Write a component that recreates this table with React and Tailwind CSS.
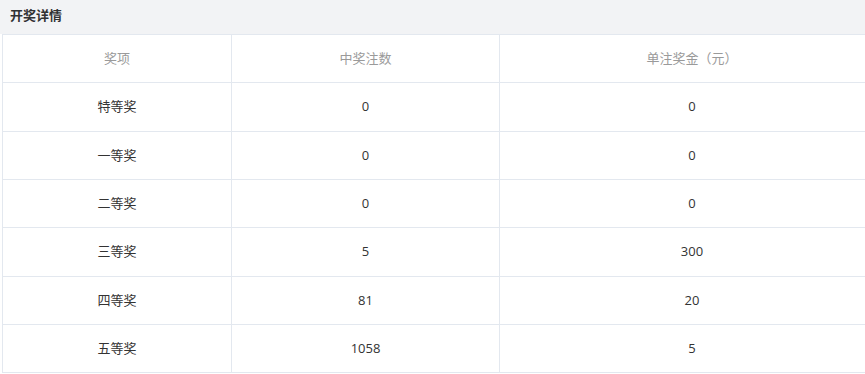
const rows = [
    { name: '特等奖', count: '0', prize: '0' },
    { name: '一等奖', count: '0', prize: '0' },
    { name: '二等奖', count: '0', prize: '0' },
    { name: '三等奖', count: '5', prize: '300' },
    { name: '四等奖', count: '81', prize: '20' },
    { name: '五等奖', count: '1058', prize: '5' },
];

export default function App() {
    return (
        <div className="w-[865px] h-[374px] bg-white overflow-hidden font-['Open_Sans','Noto_Sans_CJK_SC',sans-serif] text-[13px]">
            {/* Title bar */}
            <div className="h-[34px] bg-[#f2f3f5] flex items-center px-[10px] pb-[3px]">
                <span className="font-bold text-[#303133]">开奖详情</span>
            </div>

            {/* Table (wider than the view, cut at the right) */}
            <div className="ml-[2px] w-[882px] border-l border-t border-[#e3e8ef]">
                <div className="grid grid-cols-[229px_268px_1fr] h-[48px] border-b border-[#e3e8ef] text-[#9a9a9a]">
                    <div className="flex items-center justify-center border-r border-[#e3e8ef]">奖项</div>
                    <div className="flex items-center justify-center border-r border-[#e3e8ef]">中奖注数</div>
                    <div className="flex items-center justify-center">单注奖金（元）</div>
                </div>
                {rows.map((row, i) => (
                    <div
                        key={row.name}
                        className={`grid grid-cols-[229px_268px_1fr] border-b border-[#e3e8ef] text-[#333] ${i % 3 === 0 ? 'h-[49px]' : 'h-[48px]'}`}
                    >
                        <div className="flex items-center justify-center border-r border-[#e3e8ef]">{row.name}</div>
                        <div className="flex items-center justify-center border-r border-[#e3e8ef]">{row.count}</div>
                        <div className="flex items-center justify-center">{row.prize}</div>
                    </div>
                ))}
            </div>
        </div>
    );
}
